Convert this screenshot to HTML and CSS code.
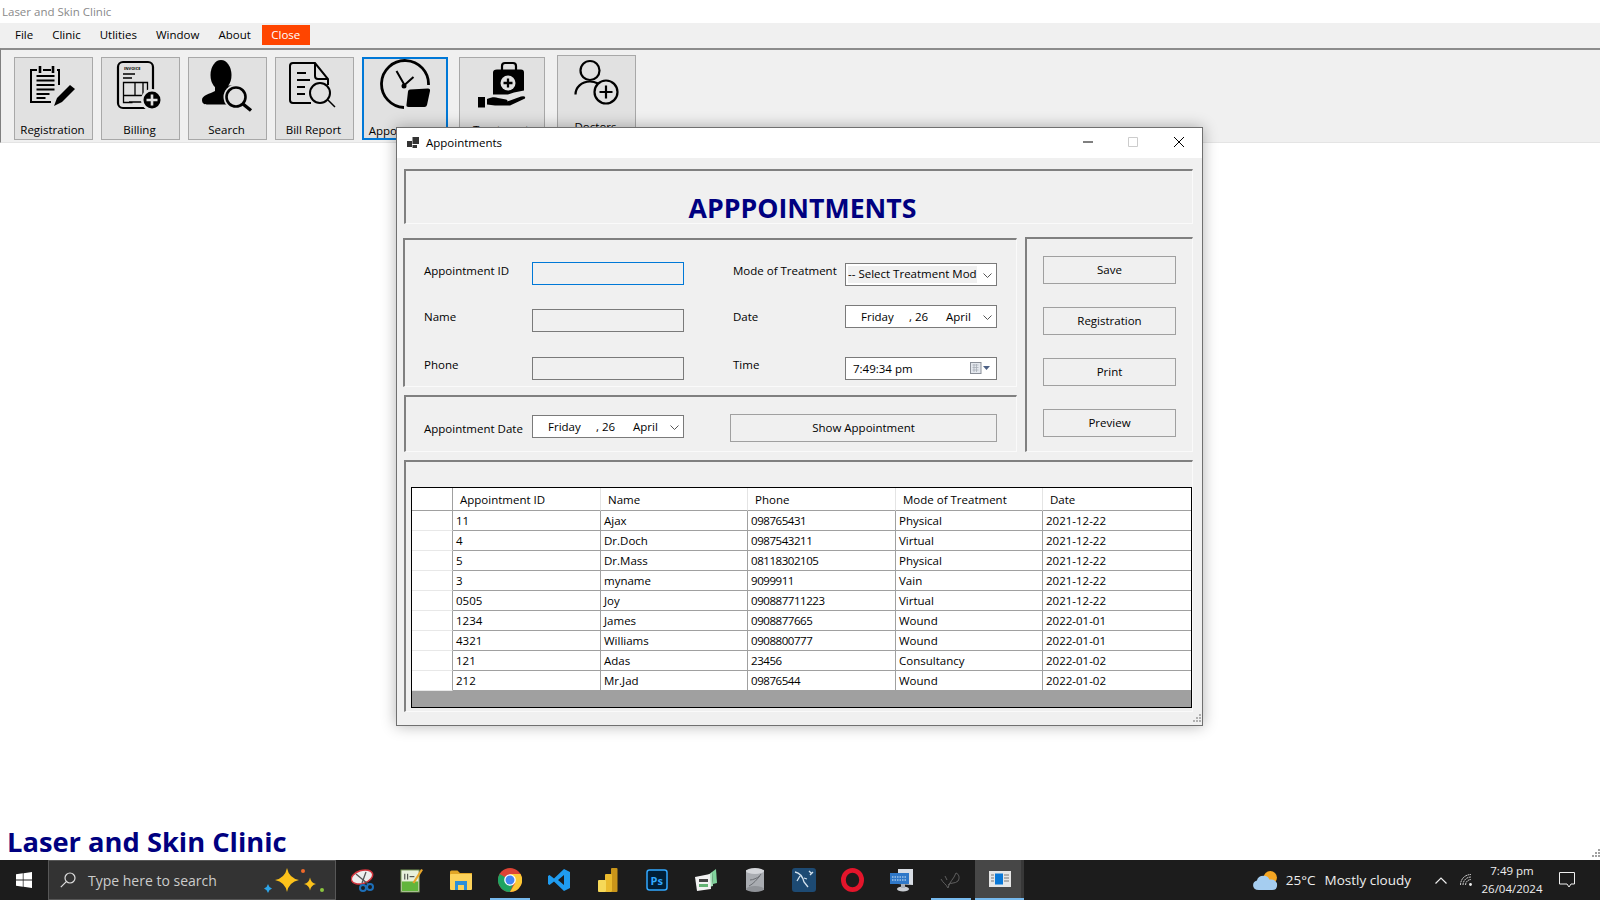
FILE: index.html
```html
<!DOCTYPE html>
<html lang="en">
<head>
    <meta charset="UTF-8">
    <meta name="viewport" content="width=device-width, initial-scale=1.0">
    <title>Laser and Skin Clinic</title>
    <link rel="stylesheet" href="styles.css">
</head>
<body>
    <div class="app-title">Laser and Skin Clinic</div>

    <nav class="menubar">
        <span class="menu-item">File</span>
        <span class="menu-item">Clinic</span>
        <span class="menu-item">Utlities</span>
        <span class="menu-item">Window</span>
        <span class="menu-item">About</span>
        <span class="menu-close">Close</span>
    </nav>

    <div class="toolstrip">
        <button class="tool" type="button">
            <svg class="tool-icon" viewBox="15 58 77 60" fill="none" stroke="#000" stroke-width="2">
                <path d="M37 70h-6v32h20M43 70h8M57 70h2v15"/>
                <path d="M40 66v7M53 66v7" stroke-width="2.6"/>
                <path d="M36.500 76h18M36.500 80.500h18M36.500 85h18M36.500 89.500h18M36.500 94h13M36.500 98h9"/>
                <path d="M54 106l3-8 13-13 5 4-13 13z" fill="#000" stroke="none"/>
            </svg>
            <span>Registration</span>
        </button>
        <button class="tool" type="button">
            <svg class="tool-icon" viewBox="102 58 77 60" fill="none" stroke="#000" stroke-width="2">
                <rect x="118" y="62" width="35" height="46" rx="5" stroke-width="2.2"/>
                <text x="124" y="70" font-size="4" font-weight="700" fill="#000" stroke="none">INVOICE</text>
                <path d="M123 74h12M123 78h9" stroke-width="1.300"/>
                <path d="M123.500 82.500h24v13h-24zM135 82.500v13M143 82.500v13M123.500 95.500v7h9M129 102h16" stroke-width="1.300"/>
                <circle cx="152" cy="100" r="11" fill="#e1e1e1" stroke="none"/>
                <circle cx="152" cy="100" r="8.500" fill="#000" stroke-width="0"/>
                <path d="M152 94.500v11M146.500 100h11" stroke="#e1e1e1" stroke-width="2.600"/>
            </svg>
            <span>Billing</span>
        </button>
        <button class="tool" type="button">
            <svg class="tool-icon" viewBox="189 58 77 60" fill="none" stroke="#000" stroke-width="3">
                <ellipse cx="221" cy="75" rx="10.500" ry="15" fill="#000" stroke="none"/>
                <path d="M215 86v5c-5 3-13 4-13 9 0 4 3 4.500 6 4.500h26l6-18-10-1z" fill="#000" stroke="none"/>
                <circle cx="236" cy="97" r="12.500" fill="#e1e1e1" stroke="none"/>
                <circle cx="236" cy="97" r="9.500" stroke-width="2.600"/>
                <path d="M243 104l8 6.500" stroke-width="3.400"/>
            </svg>
            <span>Search</span>
        </button>
        <button class="tool" type="button">
            <svg class="tool-icon" viewBox="276 58 77 60" fill="none" stroke="#000" stroke-width="2">
                <path d="M311 103h-18q-3 0-3-3v-34q0-3 3-3h22l13 16v6"/>
                <path d="M315 63v13q0 3 3 3h10"/>
                <path d="M297 73h9M297 80h13M297 87h8M297 94h8"/>
                <circle cx="320" cy="93" r="10" fill="#e1e1e1"/>
                <path d="M328 100l7 7" stroke-width="1.500"/>
            </svg>
            <span>Bill Report</span>
        </button>
        <button class="tool tool-active" type="button">
            <svg class="tool-icon" viewBox="364 59 82 60" fill="none" stroke="#000" stroke-width="2.800">
                <path d="M428.500 85A23.500 23.500 0 1 0 404 107.500"/>
                <path d="M404.500 85l-8-14M404.500 85l9-8" stroke-width="2"/>
                <circle cx="404" cy="86" r="2.500" fill="#000" stroke="none"/>
                <path d="M410 89.500l18-1q2.500 0 2 2.500l-3 14q-.5 2-2.500 2h-16q-2.500 0-2-2.500l1.500-13q.3-2 2-2z" fill="#000" stroke="none"/>
            </svg>
            <span>Appointment</span>
        </button>
        <button class="tool tool-wide tool-treatment" type="button">
            <svg class="tool-icon" viewBox="460 58 84 60" fill="none" stroke="#000" stroke-width="2">
                <path d="M502 70v-4q0-3 3-3h8q3 0 3 3v4" stroke-width="2.200"/>
                <path d="M497 69.500h24q3 0 3 3v18l-10 2-6 2h-15v-22q0-3 4-3z" fill="#000" stroke="none"/>
                <circle cx="508" cy="83" r="7.500" fill="#e1e1e1" stroke="none"/>
                <path d="M508 78.500v9M503.500 83h9" stroke-width="2.300"/>
                <path d="M478 97h7v10.500h-7z" fill="#000" stroke="none"/>
                <path d="M487 99c5-2 8-2 11-1l8 1.500q3 1 0 2.500h-8l9-.5 14-5q5-1 4 2l-15 7h-15l-8-1z" fill="#000" stroke="none"/>
            </svg>
            <span>Treatment</span>
        </button>
        <button class="tool tool-doctors" type="button">
            <svg class="tool-icon" viewBox="558 56 77 56" fill="none" stroke="#000" stroke-width="2.200">
                <circle cx="590" cy="70.500" r="9.500"/>
                <path d="M575.500 94.500c0-7 6-13 14.500-13 3.500 0 6 1 8 2"/>
                <circle cx="606" cy="92" r="11.500"/>
                <path d="M606 85.500v13M599.500 92h13"/>
            </svg>
            <span>Doctors</span>
        </button>
    </div>

    <main class="workspace">
        <div class="clinic-name">Laser and Skin Clinic</div>
        <svg class="page-grip" viewBox="0 0 10 10" fill="#a0a0a0">
            <rect x="8" y="0" width="2" height="2"/><rect x="5" y="3" width="2" height="2"/><rect x="8" y="3" width="2" height="2"/>
            <rect x="2" y="6" width="2" height="2"/><rect x="5" y="6" width="2" height="2"/><rect x="8" y="6" width="2" height="2"/>
        </svg>
    </main>

    <section class="window">
        <header class="win-titlebar">
            <svg class="win-icon" viewBox="0 0 12 11" fill="#333">
                <rect x="0" y="4" width="5" height="6"/><rect x="5.500" y="0" width="6.500" height="7"/><rect x="5.500" y="8" width="4.500" height="3"/>
            </svg>
            <span class="win-title">Appointments</span>
            <svg class="win-ctl win-min" viewBox="0 0 10 10"><path d="M0 5h10" stroke="#000"/></svg>
            <svg class="win-ctl win-max" viewBox="0 0 10 10" fill="none"><path d="M.5.500h9v9h-9z" stroke="#ccc"/></svg>
            <svg class="win-ctl win-close" viewBox="0 0 10 10"><path d="M0 0l10 10M10 0L0 10" stroke="#000"/></svg>
        </header>

        <div class="win-body">
            <div class="etched title-panel">
                <h1>APPPOINTMENTS</h1>
            </div>

            <div class="form-area">
                <div class="form-left">
                    <div class="etched fields-panel">
                        <label class="field-label label-first">Appointment ID</label>
                        <input class="text-input text-focus" type="text">
                        <label class="field-label label-first label-right">Mode of Treatment</label>
                        <div class="ctl ctl-select">
                            <span class="select-text">-- Select Treatment Mod</span>
                            <svg class="chevron" viewBox="0 0 9 5" fill="none"><path d="M.5.500l4 4 4-4" stroke="#555"/></svg>
                        </div>

                        <label class="field-label">Name</label>
                        <input class="text-input" type="text">
                        <label class="field-label label-right">Date</label>
                        <div class="ctl ctl-date-up">
                            <span class="d-day">Friday</span><span class="d-num">, 26</span><span class="d-mon">April</span>
                            <svg class="chevron" viewBox="0 0 9 5" fill="none"><path d="M.5.500l4 4 4-4" stroke="#555"/></svg>
                        </div>

                        <label class="field-label">Phone</label>
                        <input class="text-input" type="text">
                        <label class="field-label label-right">Time</label>
                        <div class="ctl">
                            <span class="time-text">7:49:34 pm</span>
                            <svg class="cal-icon" viewBox="0 0 20 12">
                                <rect x=".5" y=".5" width="10.500" height="11" fill="#e4e8ee" stroke="#8a8f98"/>
                                <path d="M2.500 3h6M2.500 5.500h6M2.500 8h6M4 2v8M6.500 2v8" stroke="#a8aeb8" stroke-width=".8"/>
                                <path d="M13 4h7l-3.500 4z" fill="#4d6185"/>
                            </svg>
                        </div>
                    </div>

                    <div class="etched date-panel">
                        <label class="field-label date-label">Appointment Date</label>
                        <div class="ctl ctl-appt">
                            <span class="d-day">Friday</span><span class="d-num">, 26</span><span class="d-mon">April</span>
                            <svg class="chevron" viewBox="0 0 9 5" fill="none"><path d="M.5.500l4 4 4-4" stroke="#555"/></svg>
                        </div>
                        <button class="btn btn-show" type="button">Show Appointment</button>
                    </div>
                </div>

                <div class="etched actions-panel">
                    <button class="btn" type="button">Save</button>
                    <button class="btn" type="button">Registration</button>
                    <button class="btn" type="button">Print</button>
                    <button class="btn" type="button">Preview</button>
                </div>
            </div>

            <div class="etched grid-panel">
                <div class="grid-box">
                    <table class="grid">
                        <colgroup>
                            <col class="c-head"><col class="c-148"><col class="c-147"><col class="c-148"><col class="c-147"><col class="c-148">
                        </colgroup>
                        <thead>
                            <tr><th class="rh"></th><th>Appointment ID</th><th>Name</th><th>Phone</th><th>Mode of Treatment</th><th>Date</th></tr>
                        </thead>
                        <tbody>
                            <tr><td class="rh"></td><td>11</td><td>Ajax</td><td>098765431</td><td>Physical</td><td>2021-12-22</td></tr>
                            <tr><td class="rh"></td><td>4</td><td>Dr.Doch</td><td>0987543211</td><td>Virtual</td><td>2021-12-22</td></tr>
                            <tr><td class="rh"></td><td>5</td><td>Dr.Mass</td><td>08118302105</td><td>Physical</td><td>2021-12-22</td></tr>
                            <tr><td class="rh"></td><td>3</td><td>myname</td><td>9099911</td><td>Vain</td><td>2021-12-22</td></tr>
                            <tr><td class="rh"></td><td>0505</td><td>Joy</td><td>090887711223</td><td>Virtual</td><td>2021-12-22</td></tr>
                            <tr><td class="rh"></td><td>1234</td><td>James</td><td>0908877665</td><td>Wound</td><td>2022-01-01</td></tr>
                            <tr><td class="rh"></td><td>4321</td><td>Williams</td><td>0908800777</td><td>Wound</td><td>2022-01-01</td></tr>
                            <tr><td class="rh"></td><td>121</td><td>Adas</td><td>23456</td><td>Consultancy</td><td>2022-01-02</td></tr>
                            <tr><td class="rh"></td><td>212</td><td>Mr.Jad</td><td>09876544</td><td>Wound</td><td>2022-01-02</td></tr>
                        </tbody>
                    </table>
                </div>
            </div>
        </div>
        <svg class="win-grip" viewBox="0 0 10 10" fill="#b0b0b0">
            <rect x="8" y="0" width="2" height="2"/><rect x="5" y="3" width="2" height="2"/><rect x="8" y="3" width="2" height="2"/>
            <rect x="2" y="6" width="2" height="2"/><rect x="5" y="6" width="2" height="2"/><rect x="8" y="6" width="2" height="2"/>
        </svg>
    </section>

    <footer class="taskbar">
        <div class="start">
            <svg viewBox="0 0 16 16" width="16" height="16" fill="#fff">
                <path d="M0 2.300l6.800-1v6.300H0zM7.500 1.200L16 0v7.600H7.500zM0 8.400h6.800v6.300l-6.800-1zM7.500 8.400H16V16l-8.500-1.200z"/>
            </svg>
        </div>
        <div class="search-box">
            <svg class="search-icon" viewBox="0 0 16 16" fill="none" stroke="#ddd" stroke-width="1.200">
                <circle cx="10" cy="6" r="5"/><path d="M6.300 9.700L.8 15.200"/>
            </svg>
            <span class="search-text">Type here to search</span>
            <svg class="sparkles" viewBox="262 862 66 36">
                <path d="M288 868q2 10 12 12-10 2-12 12-2-10-12-12 10-2 12-12z" fill="#fcc21b"/>
                <path d="M311 877.500q1 5.500 6 6.500-5 1-6 6.500-1-5.500-6-6.500 5-1 6-6.500z" fill="#fcc21b"/>
                <path d="M269 884q.8 3.500 4 4.500-3.200 1-4 4.500-.8-3.500-4-4.500 3.200-1 4-4.500z" fill="#2da5e8"/>
                <circle cx="304" cy="871" r="2" fill="#f0692a"/>
                <circle cx="323" cy="890" r="2" fill="#8cc63f"/>
            </svg>
        </div>

        <div class="task-apps">
            <span class="task-slot">
                <svg viewBox="0 0 24 24" width="24" height="24">
                    <ellipse cx="11" cy="9" rx="11" ry="6.500" transform="rotate(-18 11 9)" fill="#eee" stroke="#d2333c" stroke-width="1.500"/>
                    <path d="M5 6l12 10M15 4L11 15" stroke="#555" stroke-width="1.300"/>
                    <circle cx="19" cy="19" r="3" fill="none" stroke="#1d6fb8" stroke-width="2"/>
                    <circle cx="12" cy="20" r="3" fill="none" stroke="#1d6fb8" stroke-width="2"/>
                </svg>
            </span>
            <span class="task-slot">
                <svg viewBox="0 0 24 26" width="23" height="25">
                    <rect x="1" y="2" width="19" height="23" fill="#e8f0dc" stroke="#6c8c4a"/>
                    <rect x="2" y="14" width="17" height="10" fill="#62b53c"/>
                    <path d="M5 6v6M8 6v6M10 9h5" stroke="#333"/>
                    <path d="M22 1l2 1-9 14-2-1z" fill="#e8a62c"/>
                </svg>
            </span>
            <span class="task-slot">
                <svg viewBox="0 0 22 20" width="22" height="20">
                    <path d="M0 2q0-1.500 1.500-1.500h6L10 3h12v3H0z" fill="#e0a526"/>
                    <rect x="0" y="4" width="22" height="16" rx="1" fill="#fcd25a"/>
                    <rect x="5" y="11" width="12" height="9" fill="#2b8fd9"/>
                    <rect x="8" y="15" width="6" height="5" fill="#fcd25a"/>
                </svg>
            </span>
            <span class="task-slot slot-open">
                <svg viewBox="0 0 24 24" width="24" height="24">
                    <circle cx="12" cy="12" r="12" fill="#dd4335"/>
                    <path d="M12 12L1.600 6A12 12 0 0 0 12 24l5-12z" fill="#1ea362"/>
                    <path d="M12 6h10.500A12 12 0 0 1 12 24l5.200-9z" fill="#fcc934"/>
                    <circle cx="12" cy="12" r="5.800" fill="#fff"/>
                    <circle cx="12" cy="12" r="4.500" fill="#4285f4"/>
                </svg>
            </span>
            <span class="task-slot">
                <svg viewBox="0 0 24 24" width="24" height="24">
                    <path d="M17 1l6 3v16l-6 3-10-9.500-4.500 3.500L1 16V8l1.500-1L7 10.500zM17 7l-6 5 6 5z" fill="#1f9cf0" fill-rule="evenodd"/>
                </svg>
            </span>
            <span class="task-slot">
                <svg viewBox="0 0 20 24" width="20" height="24">
                    <rect x="13" y="0" width="6.500" height="24" rx="1" fill="#c9951a"/>
                    <rect x="7" y="6" width="7" height="18" rx="1" fill="#eaba2d"/>
                    <rect x="0" y="12" width="8" height="12" rx="1" fill="#f6d858"/>
                </svg>
            </span>
            <span class="task-slot">
                <svg viewBox="0 0 22 22" width="22" height="22">
                    <rect x="1" y="1" width="20" height="20" rx="2.500" fill="#001e36" stroke="#31a8ff" stroke-width="1.500"/>
                    <text x="4.500" y="15.500" font-size="11" font-weight="700" fill="#31a8ff" font-family="Open Sans, sans-serif">Ps</text>
                </svg>
            </span>
            <span class="task-slot">
                <svg viewBox="0 0 24 24" width="24" height="24">
                    <path d="M22 1l1 14-4 1-1-12z" fill="#7fd39b"/>
                    <path d="M18 4l1 14-4 1-1-12z" fill="#a5e0b8"/>
                    <path d="M1 9l15-3 1 15-14 2z" fill="#f2f2f2"/>
                    <rect x="5" y="11" width="9" height="3" fill="#444"/>
                    <rect x="5" y="16" width="9" height="3" fill="#64b374"/>
                </svg>
            </span>
            <span class="task-slot">
                <svg viewBox="0 0 18 24" width="18" height="24">
                    <rect x="0" y="2" width="18" height="20" fill="#a9acb1"/>
                    <ellipse cx="9" cy="3" rx="9" ry="3" fill="#d4d6da"/>
                    <ellipse cx="9" cy="21" rx="9" ry="3" fill="#909398"/>
                    <path d="M3 18c4-2 8-6 12-12M4 12c3 0 7-2 10-4" stroke="#6c6f74" fill="none"/>
                </svg>
            </span>
            <span class="task-slot">
                <svg viewBox="0 0 24 24" width="24" height="24">
                    <rect x="0" y="0" width="24" height="24" rx="3" fill="#1d4a73"/>
                    <path d="M3 4c5 1 8 6 9 10l4 5M8 8L5 13M12 10l3 1M17 3l3 3M18 7l3-3" stroke="#d6e4ef" stroke-width="1.300" fill="none"/>
                </svg>
            </span>
            <span class="task-slot">
                <svg viewBox="0 0 24 24" width="23" height="24">
                    <ellipse cx="12" cy="12" rx="9.500" ry="10" fill="none" stroke="#e3152b" stroke-width="5"/>
                </svg>
            </span>
            <span class="task-slot">
                <svg viewBox="0 0 24 24" width="24" height="24">
                    <path d="M8 1h15v16l-15-1z" fill="#d8dde4"/>
                    <rect x="0" y="5" width="19" height="11" fill="#2f78c8"/>
                    <path d="M2 9h15M2 12h15" stroke="#d6e8f8" stroke-dasharray="1.500 1"/>
                    <ellipse cx="13" cy="21" rx="6" ry="2.500" fill="#c8ccd2"/>
                    <rect x="11" y="16" width="4" height="4" fill="#aab0b8"/>
                </svg>
            </span>
            <span class="task-slot slot-open">
                <svg viewBox="0 0 24 24" width="24" height="24" fill="none" stroke="#666" stroke-width=".9">
                    <path d="M2 11c2 4 5 5 7 9 1-6 6-9 8-15 3 1 4 5 2 8-3 3-7 1-10 4M6 8l2 4"/>
                </svg>
            </span>
            <span class="task-slot slot-active">
                <svg viewBox="0 0 22 16" width="22" height="16">
                    <rect x="0" y="0" width="22" height="16" fill="#e6e6e6"/>
                    <rect x="6" y="2.500" width="8" height="11" fill="#0a78d7"/>
                    <path d="M2 4h3M2 7h3M2 10h3M15 4h5M15 7h5M15 10h5" stroke="#777"/>
                </svg>
            </span>
        </div>

        <div class="tray">
            <svg class="weather" viewBox="0 0 26 22" width="25" height="21">
                <circle cx="18" cy="8" r="7" fill="#f5a623"/>
                <path d="M6 21q-6 0-6-5 0-4 4-5 1-5 7-5 5 0 6 4 6-1 8 4 1 7-5 7z" fill="#a5cdf0"/>
            </svg>
            <span class="weather-temp">25°C</span>
            <span class="weather-text">Mostly cloudy</span>
            <svg class="tray-chevron" viewBox="0 0 12 7" fill="none" stroke="#eee" stroke-width="1.200">
                <path d="M.5 6.500L6 1l5.500 5.500"/>
            </svg>
            <svg class="tray-net" viewBox="0 0 12 12" fill="none" stroke="#ddd" stroke-width=".9">
                <path d="M.5 11c0-6 4.500-10.500 10.500-10.500M3 11c0-4.500 3.500-8 8-8M5.500 11c0-3 2.500-5.500 5.500-5.500" stroke-dasharray="2 .6"/>
                <circle cx="10.500" cy="10.500" r="1.400" fill="#eee" stroke="none"/>
            </svg>
            <div class="clock">
                <span>7:49 pm</span>
                <span>26/04/2024</span>
            </div>
            <svg class="tray-notify" viewBox="0 0 16 16" fill="none" stroke="#eee">
                <path d="M.5.500h15v11.500h-3.500l-2 3-2-3H.5z"/>
            </svg>
        </div>
    </footer>
</body>
</html>
```

FILE: styles.css
```css
* {
    box-sizing: border-box;
}

body {
    font-family: 'Open Sans', 'Noto Sans', sans-serif;
    font-size: 11.5px;
    color: #000;
    margin: 0;
    padding: 0;
    width: 1600px;
    height: 900px;
    overflow: hidden;
    background-color: #fff;
    position: relative;
    display: flex;
    flex-direction: column;
}

.app-title {
    height: 23px;
    line-height: 23px;
    padding-left: 2px;
    color: #8a8a8a;
}

.menubar {
    height: 25px;
    background-color: #f0f0f0;
    display: flex;
    align-items: center;
    padding: 0 0 2px 15px;
    gap: 19px;
}

.menu-close {
    background-color: #ff4500;
    color: #fff;
    width: 48px;
    height: 20px;
    line-height: 20px;
    text-align: center;
    margin: 1px 0 0 -8px;
}

.toolstrip {
    height: 95px;
    flex: none;
    background-color: #f0f0f0;
    border-top: 2px solid #8c8c8c;
    border-left: 1px solid #808080;
    border-bottom: 1px solid #e4e4e4;
    display: flex;
    align-items: flex-start;
    padding: 7px 0 0 13px;
    gap: 8px;
}

.tool {
    width: 79px;
    height: 83px;
    padding: 0;
    background-color: #e1e1e1;
    border: 1px solid #a8a8a8;
    font: inherit;
    color: #000;
    display: flex;
    flex-direction: column;
    align-items: center;
}

.tool-icon {
    width: 77px;
    height: 60px;
    flex: none;
}

.tool span {
    line-height: 16px;
    margin: 4px 2px 0 0;
    white-space: nowrap;
}

.tool-active {
    width: 86px;
    border: 2px solid #0078d7;
}

.tool-active .tool-icon {
    width: 82px;
}

.tool-wide {
    width: 86px;
}

.tool-wide .tool-icon {
    width: 84px;
}

.tool-treatment {
    margin-left: 3px;
}

.tool-doctors {
    margin-left: 4px;
    margin-top: -2px;
}

.tool-doctors span {
    margin-top: 7px;
}

.tool-doctors .tool-icon {
    height: 56px;
}

.workspace {
    flex: 1;
    display: flex;
    align-items: flex-end;
    justify-content: space-between;
    padding-left: 7px;
}

.clinic-name {
    color: #000080;
    font-size: 27.3px;
    font-weight: 700;
    line-height: 36px;
}

.page-grip {
    width: 10px;
    height: 10px;
    margin-bottom: 1px;
}

/* child window */
.window {
    position: absolute;
    left: 396px;
    top: 127px;
    width: 807px;
    height: 599px;
    background-color: #f0f0f0;
    border: 1px solid #707070;
    box-shadow: 0 0 14px rgba(0, 0, 0, 0.3);
}

.win-titlebar {
    height: 30px;
    background-color: #fff;
    display: flex;
    align-items: center;
    padding: 0 0 2px 10px;
}

.win-icon {
    width: 12px;
    height: 11px;
    margin-right: 7px;
}

.win-title {
    flex: 1;
    font-size: 11.5px;
}

.win-ctl {
    width: 10px;
    height: 10px;
}

.win-min {
    margin-right: 35px;
}

.win-max {
    margin-right: 36px;
}

.win-close {
    margin-right: 18px;
}

.win-body {
    padding: 11px 9px 0 7px;
}

.win-grip {
    position: absolute;
    right: 1px;
    bottom: 1px;
    width: 10px;
    height: 10px;
}

.etched {
    border-top: 2px solid #808080;
    border-left: 2px solid #808080;
    border-right: 1px solid #fafafa;
    border-bottom: 1px solid #fafafa;
}

.title-panel {
    height: 55px;
    display: flex;
    align-items: flex-end;
    justify-content: center;
    padding-left: 7px;
}

.title-panel h1 {
    margin: 0 0 -2px;
    color: #000080;
    font-size: 26.7px;
    line-height: 34px;
    font-weight: 700;
}

.form-area {
    display: grid;
    grid-template-columns: 614px 168px;
    gap: 8px;
    margin-top: 13px;
    margin-left: -1px;
}

.form-left {
    display: flex;
    flex-direction: column;
    gap: 8px;
    padding-top: 1px;
}

.fields-panel {
    height: 149px;
    display: grid;
    grid-template-columns: 108px 152px 161px 152px;
    grid-template-rows: 23px 24px 23px;
    row-gap: 24px;
    padding: 22px 0 0 19px;
}

.label-right {
    padding-left: 49px;
}

.field-label {
    line-height: 16px;
    white-space: nowrap;
}

.label-first {
    padding-top: 1px;
}

.text-input {
    height: 23px;
    width: 152px;
    padding: 0 4px;
    background-color: #f0f0f0;
    border: 1px solid #7a7a7a;
    outline: none;
    font: inherit;
}

.text-focus {
    border-color: #0078d7;
}

.ctl {
    height: 23px;
    width: 152px;
    background-color: #fff;
    border: 1px solid #7a7a7a;
    display: flex;
    align-items: center;
    position: relative;
    white-space: nowrap;
}

.ctl-select {
    margin-top: 1px;
    padding-left: 2px;
}

.ctl-date-up {
    margin-top: -4px;
}

.select-text {
    background-color: #f0f0f0;
    height: 17px;
    line-height: 16px;
    width: 129px;
    overflow: hidden;
}

.chevron {
    position: absolute;
    right: 4px;
    top: 9px;
    width: 9px;
    height: 5px;
}

.d-day {
    margin-left: 15px;
    width: 48px;
}

.d-num {
    width: 37px;
}

.d-mon {
    width: 40px;
}

.time-text {
    margin-left: 7px;
}

.cal-icon {
    position: absolute;
    right: 6px;
    top: 4px;
    width: 20px;
    height: 12px;
}

.date-panel {
    height: 57px;
    margin-left: 1px;
    display: flex;
    align-items: center;
    padding: 8px 0 0 18px;
}

.date-label {
    width: 108px;
    padding-top: 2px;
}

.ctl-appt {
    margin-top: -3px;
}

.btn {
    height: 28px;
    width: 133px;
    padding: 0 0 2px;
    background-color: #f0f0f0;
    border: 1px solid #a0a0a0;
    font: inherit;
    color: #000;
}

.btn-show {
    width: 267px;
    margin-left: 46px;
}

.actions-panel {
    display: flex;
    flex-direction: column;
    gap: 23px;
    padding: 17px 0 0 16px;
}

.grid-panel {
    margin-top: 8px;
    height: 252px;
    padding: 25px 0 0 5px;
}

.grid-box {
    width: 781px;
    height: 221px;
    background-color: #a0a0a0;
    border: 1px solid #000;
}

.grid {
    width: 779px;
    table-layout: fixed;
    border-collapse: separate;
    border-spacing: 0;
    background-color: #fff;
}

.c-head { width: 41px; }
.c-147 { width: 147px; }
.c-148 { width: 148px; }

.grid th {
    height: 23px;
    font-weight: 400;
    text-align: left;
    padding: 0 0 0 7px;
    border-right: 1px solid #e4e4e4;
    border-bottom: 1px solid #a0a0a0;
}

.grid td {
    height: 20px;
    padding: 0 0 0 3px;
    line-height: 16px;
    border-right: 1px solid #a0a0a0;
    border-bottom: 1px solid #a0a0a0;
    white-space: nowrap;
}

.grid td:nth-child(4) {
    letter-spacing: -0.45px;
}

.grid th:last-child,
.grid td:last-child {
    border-right: none;
}

.grid td.rh {
    border-bottom-color: #e8e8e8;
}

.grid th.rh {
    border-right-color: #a0a0a0;
}

/* taskbar */
.taskbar {
    height: 40px;
    flex: none;
    background-color: #1c1c1c;
    color: #fff;
    display: flex;
    align-items: center;
}

.start {
    width: 48px;
    display: flex;
    padding-left: 16px;
}

.search-box {
    width: 288px;
    height: 40px;
    background-color: #333;
    border: 1px solid #575757;
    display: flex;
    align-items: center;
    padding-left: 11px;
    position: relative;
}

.search-icon {
    width: 16px;
    height: 16px;
}

.search-text {
    color: #ccc;
    font-size: 14px;
    margin-left: 12px;
}

.sparkles {
    position: absolute;
    right: 8px;
    top: 1px;
    width: 66px;
    height: 36px;
}

.task-apps {
    display: flex;
    margin-left: 2px;
}

.task-slot {
    width: 49px;
    height: 40px;
    display: flex;
    align-items: center;
    justify-content: center;
}

.slot-open {
    background: linear-gradient(#76b9ed, #76b9ed) no-repeat center bottom / 40px 2px;
}

.slot-active {
    background-color: #474747;
    border-bottom: 2px solid #76b9ed;
    box-shadow: inset -3px 0 0 #383838;
}

.tray {
    margin-left: auto;
    display: flex;
    align-items: center;
    height: 40px;
    padding-right: 25px;
    font-size: 13.500px;
    color: #eee;
}

.weather-temp {
    margin-left: 8px;
}

.weather-text {
    margin-left: 9px;
}

.tray-chevron {
    width: 12px;
    height: 7px;
    margin-left: 24px;
}

.tray-net {
    width: 12px;
    height: 12px;
    margin-left: 13px;
}

.clock {
    display: flex;
    flex-direction: column;
    align-items: center;
    width: 58px;
    margin-left: 11px;
    font-size: 11.500px;
    line-height: 18px;
}

.tray-notify {
    width: 16px;
    height: 16px;
    margin-left: 18px;
}
```
